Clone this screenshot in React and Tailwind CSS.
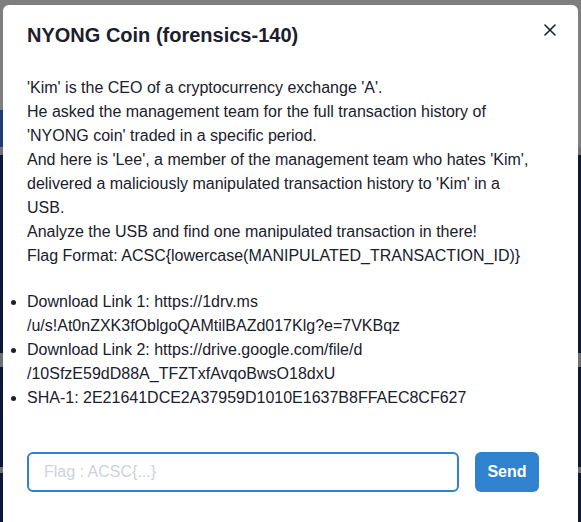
import React, { useState } from "react";

const lines = [
    "'Kim' is the CEO of a cryptocurrency exchange 'A'.",
    "He asked the management team for the full transaction history of",
    "'NYONG coin' traded in a specific period.",
    "And here is 'Lee', a member of the management team who hates 'Kim',",
    "delivered a maliciously manipulated transaction history to 'Kim' in a",
    "USB.",
    "Analyze the USB and find one manipulated transaction in there!",
    "Flag Format: ACSC{lowercase(MANIPULATED_TRANSACTION_ID)}",
];

export default function App() {
    const [flag, setFlag] = useState("");

    return (
        <div className="relative w-full h-[522px] overflow-hidden font-['Liberation_Sans',Arial,sans-serif]">
            {/* dimmed page behind the backdrop */}
            <div className="flex flex-col h-full">
                <div className="h-[110px] bg-[#7f7f7f]"></div>
                <div className="h-[37px] flex">
                    <div className="w-[20px] bg-[#22397a]"></div>
                    <div className="flex-1 bg-[#7f7f7f]"></div>
                </div>
                <div className="h-[8px] bg-[#6f7176]"></div>
                <div className="h-[198px] bg-[#0c1838]"></div>
                <div className="h-[14px] bg-[#6c6f75]"></div>
                <div className="h-[100px] bg-[#0c1838]"></div>
                <div className="h-[6px] bg-[#6c6f75]"></div>
                <div className="flex-1 bg-[#0c1838]"></div>
            </div>

            <div className="absolute left-[3px] top-[5px] w-[575px] h-[540px] bg-white rounded-[6px] text-[#1a202c]">
                <div className="flex items-start justify-between pl-6 pr-3 pt-[15px]">
                    <h2 className="text-[20px] leading-[30px] font-bold">NYONG Coin (forensics-140)</h2>
                    <button className="w-8 h-8 -mt-[6px] flex items-center justify-center rounded-md text-[#1a202c]">
                        <svg width="12" height="12" viewBox="0 0 12 12">
                            <path d="M1 1L11 11M11 1L1 11" stroke="currentColor" strokeWidth="1.6" strokeLinecap="round" />
                        </svg>
                    </button>
                </div>

                <div className="px-6 mt-[26px] text-[16px] leading-[24px]">
                    <div>
                        {lines.map((l, i) => (
                            <div key={i} className="whitespace-nowrap">{l}</div>
                        ))}
                    </div>
                    <ul className="list-disc list-outside mt-[22px]">
                        <li className="whitespace-nowrap">
                            Download Link 1: https://1drv.ms
                            <br />
                            /u/s!At0nZXK3fOblgoQAMtilBAZd017Klg?e=7VKBqz
                        </li>
                        <li className="whitespace-nowrap">
                            Download Link 2: https://drive.google.com/file/d
                            <br />
                            /10SfzE59dD88A_TFZTxfAvqoBwsO18dxU
                        </li>
                        <li className="whitespace-nowrap">SHA-1: 2E21641DCE2A37959D1010E1637B8FFAEC8CF627</li>
                    </ul>

                    <form className="flex items-center gap-4 mt-[42px]" onSubmit={(e) => e.preventDefault()}>
                        <input
                            value={flag}
                            onChange={(e) => setFlag(e.target.value)}
                            placeholder="Flag : ACSC{...}"
                            className="w-[432px] h-10 border-2 border-[#3182ce] rounded-[6px] pl-[15px] text-[16px] outline-none placeholder-[#cbd2dd]"
                        />
                        <button type="submit" className="w-16 h-10 bg-[#3182ce] rounded-[6px] text-white font-bold text-[16px]">
                            Send
                        </button>
                    </form>
                </div>
            </div>
        </div>
    );
}
